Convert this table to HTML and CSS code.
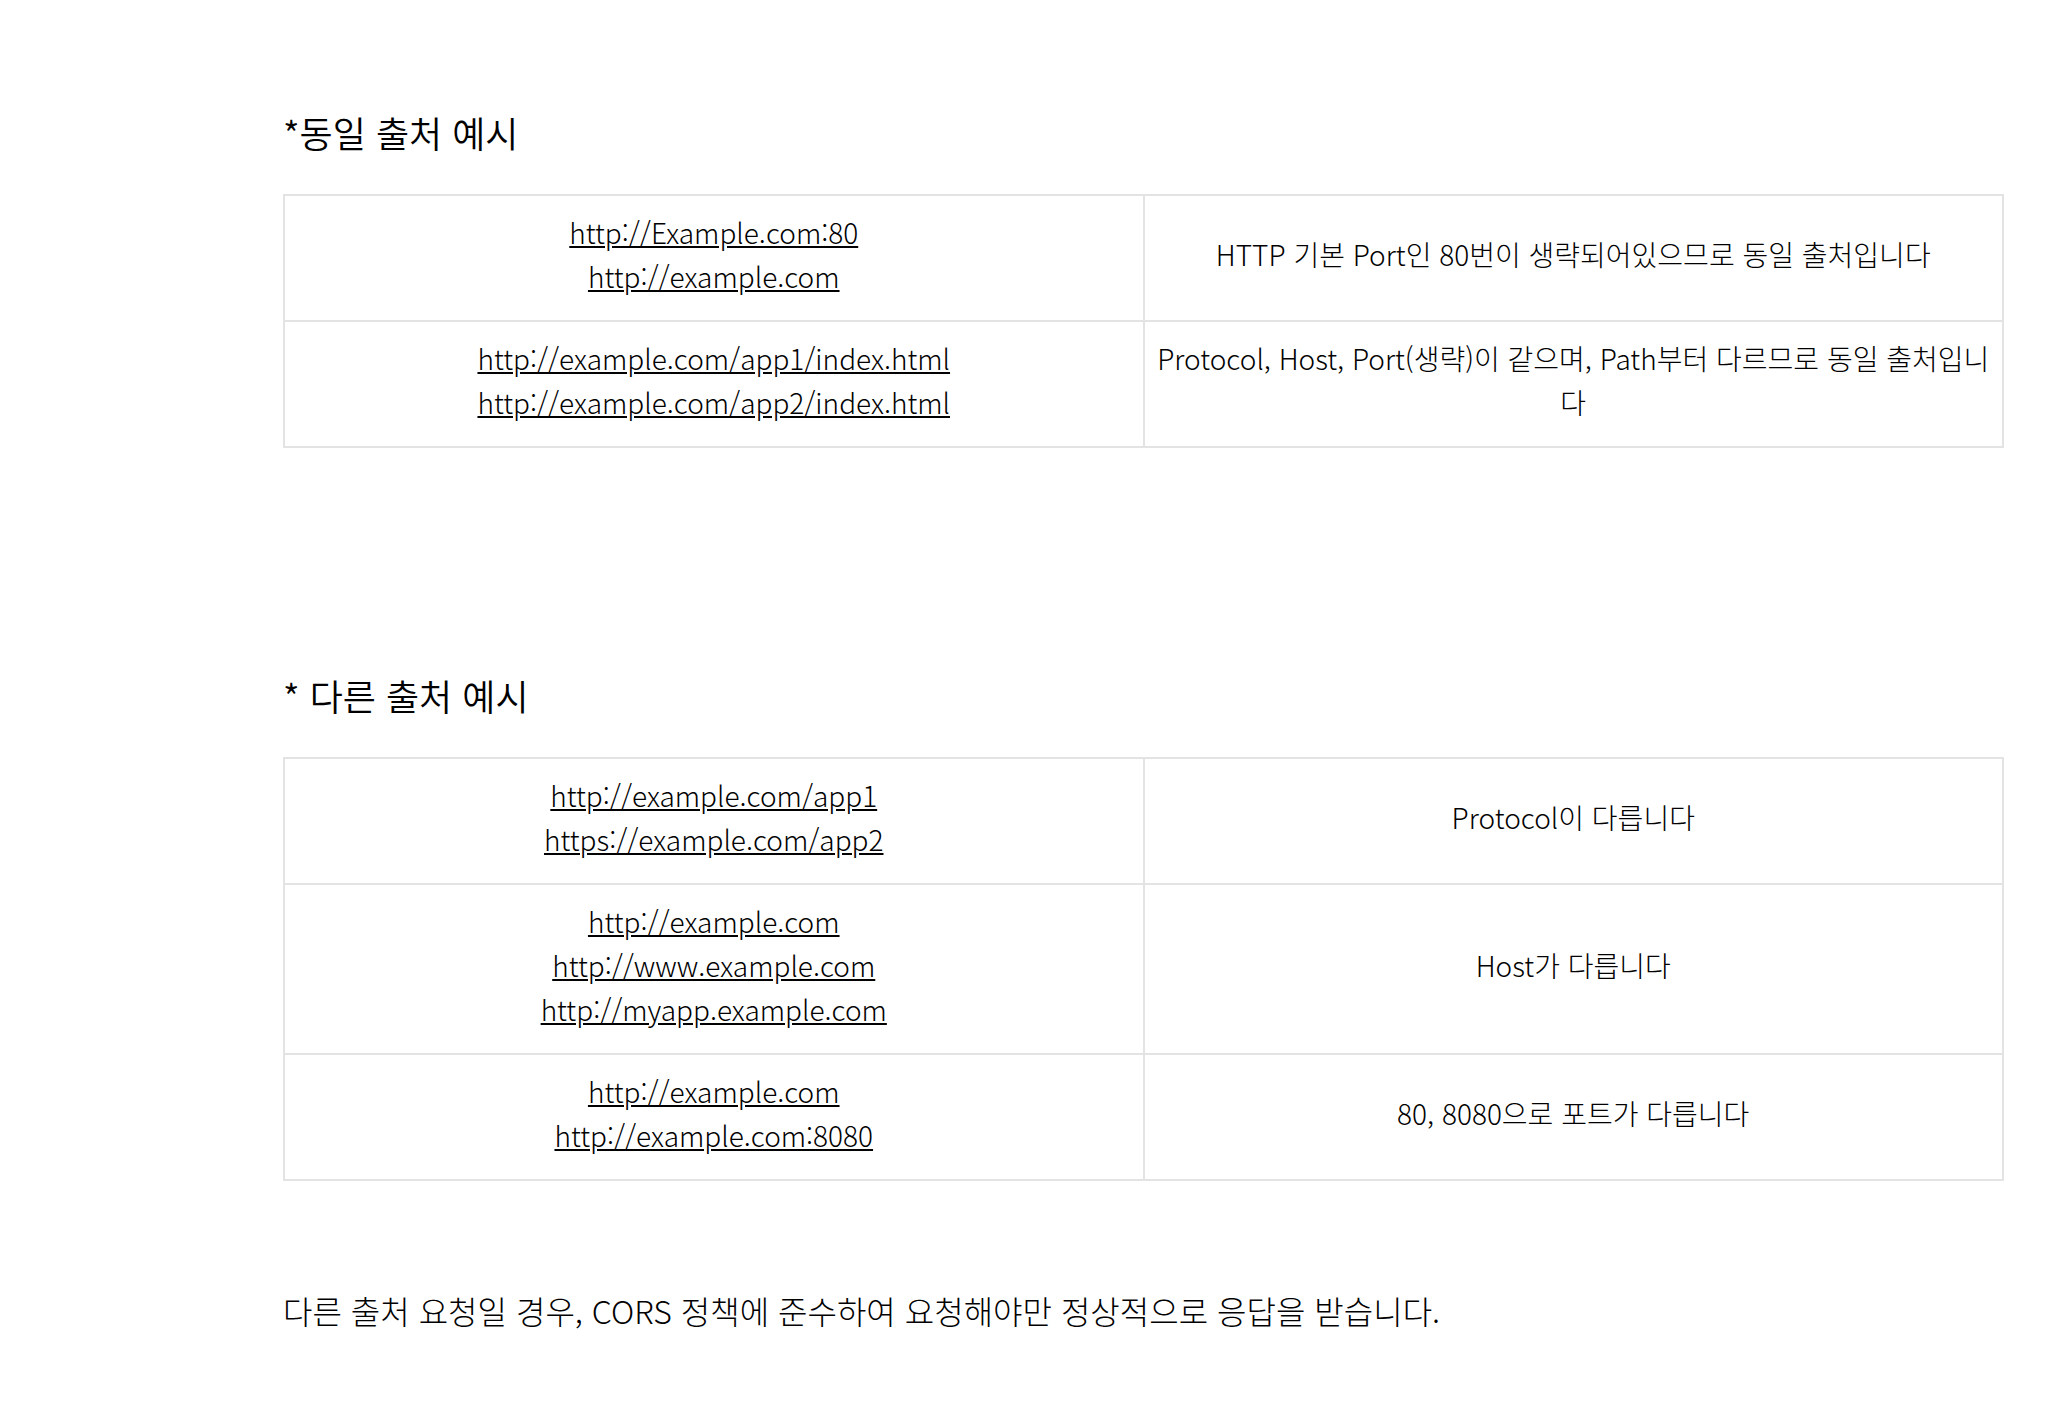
FILE: index.html
```html
<!DOCTYPE html>
<html lang="ko">
<head>
<meta charset="utf-8">
<title>출처 예시</title>
<link rel="stylesheet" href="styles.css">
</head>
<body>
<main class="page">
  <h3 class="heading heading-first">*동일 출처 예시</h3>
  <table class="origin-table">
    <tbody>
      <tr>
        <td><a href="#">http://Example.com:80</a><br><a href="#">http://example.com</a></td>
        <td>HTTP 기본 Port인 80번이 생략되어있으므로 동일 출처입니다</td>
      </tr>
      <tr>
        <td><a href="#">http://example.com/app1/index.html</a><br><a href="#">http://example.com/app2/index.html</a></td>
        <td>Protocol, Host, Port(생략)이 같으며, Path부터 다르므로 동일 출처입니다</td>
      </tr>
    </tbody>
  </table>

  <h3 class="heading heading-second">* 다른 출처 예시</h3>
  <table class="origin-table">
    <tbody>
      <tr>
        <td><a href="#">http://example.com/app1</a><br><a href="#">https://example.com/app2</a></td>
        <td>Protocol이 다릅니다</td>
      </tr>
      <tr>
        <td><a href="#">http://example.com</a><br><a href="#">http://www.example.com</a><br><a href="#">http://myapp.example.com</a></td>
        <td>Host가 다릅니다</td>
      </tr>
      <tr>
        <td><a href="#">http://example.com</a><br><a href="#">http://example.com:8080</a></td>
        <td>80, 8080으로 포트가 다릅니다</td>
      </tr>
    </tbody>
  </table>

  <p class="note">다른 출처 요청일 경우, CORS 정책에 준수하여 요청해야만 정상적으로 응답을 받습니다.</p>
</main>
</body>
</html>
```

FILE: styles.css
```css
html, body {
  margin: 0;
  padding: 0;
  background: #ffffff;
}

body {
  font-family: "Noto Sans CJK KR", "Noto Sans", sans-serif;
  font-weight: 300;
  color: #000000;
}

.page {
  width: 1721px;
  padding: 108px 0 60px 283px;
}

.heading {
  margin: 0 0 38px 0;
  font-size: 36px;
  line-height: 48px;
  font-weight: 350;
  color: #000;
}

.heading-second {
  margin-top: 223px;
}

.origin-table {
  width: 1721px;
  border-collapse: collapse;
  table-layout: fixed;
  border: 2px solid #e3e3e3;
}

.origin-table td {
  width: 50%;
  border: 2px solid #e3e3e3;
  padding: 14px 8px 22px 8px;
  text-align: center;
  vertical-align: middle;
  font-size: 28px;
  line-height: 44px;
}

.origin-table a {
  color: #000;
  text-decoration: underline;
}

.note {
  margin: 107px 0 0 0;
  font-size: 32px;
  line-height: 44px;
}
```
